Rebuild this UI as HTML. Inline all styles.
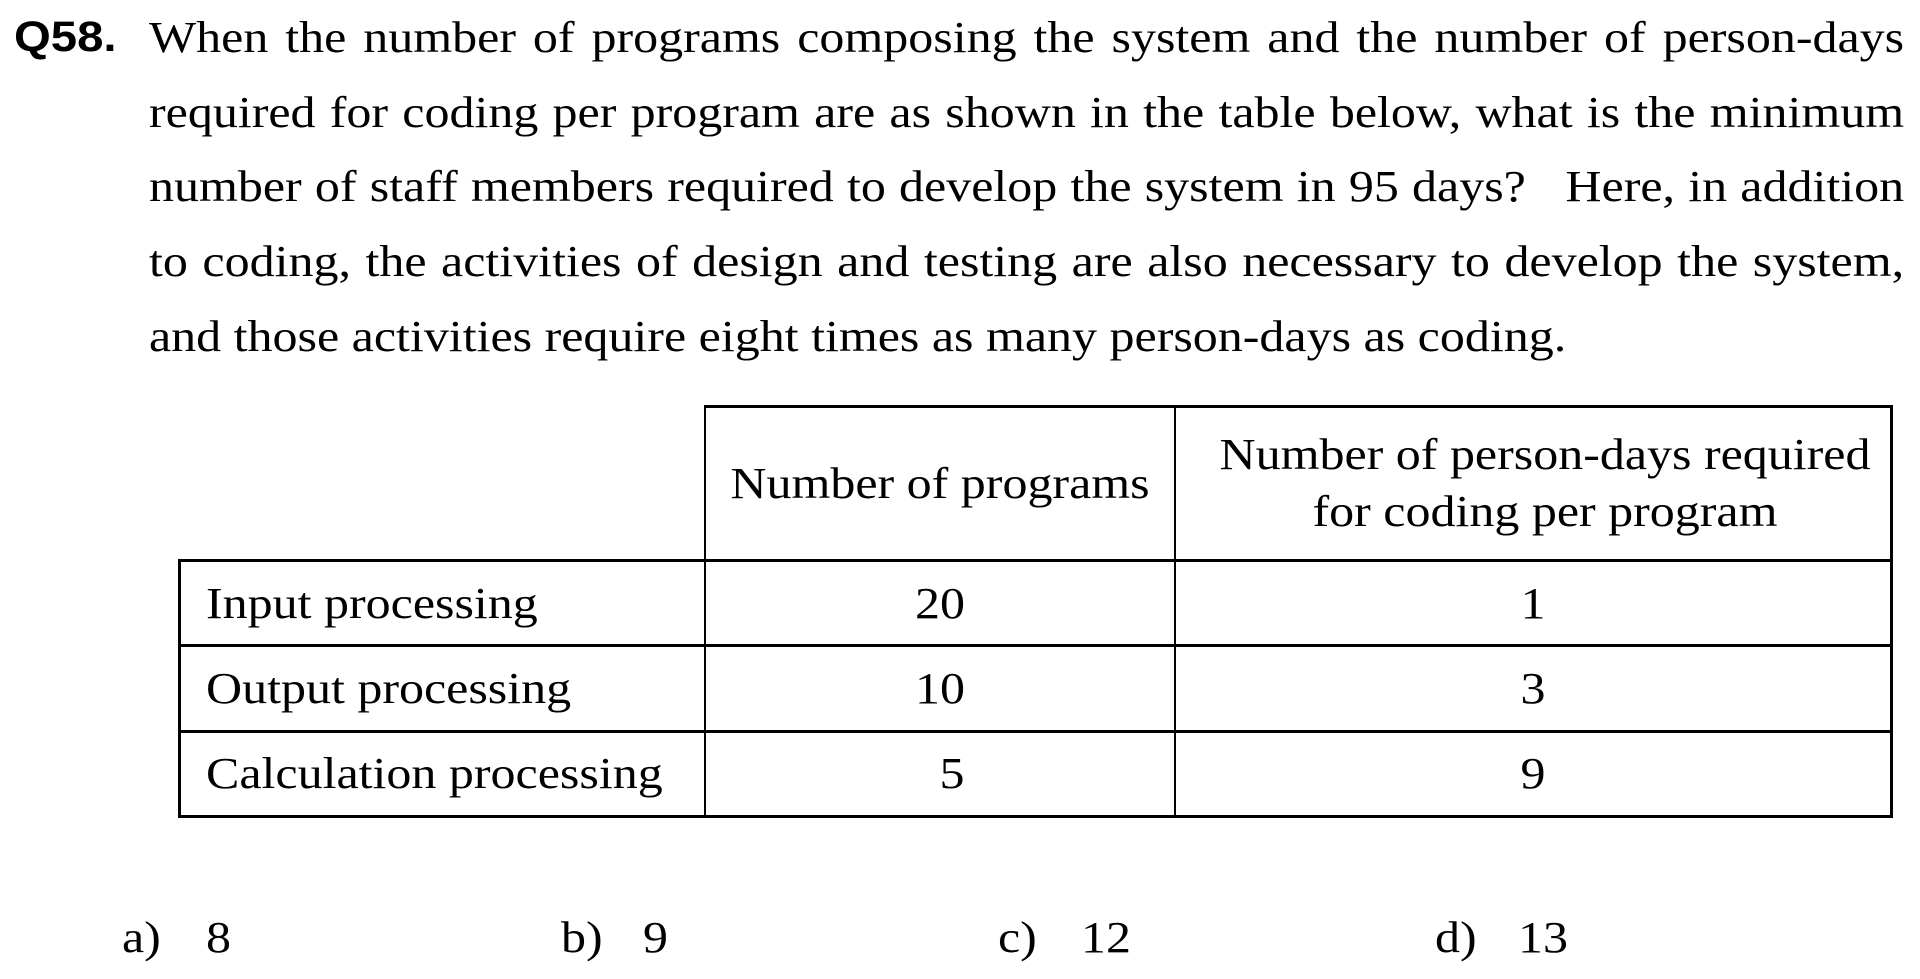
<!DOCTYPE html>
<html><head><meta charset="utf-8"><style>
body{margin:0;width:1920px;height:979px;background:#fff;position:relative;overflow:hidden;font-family:"Liberation Serif",serif;color:#000}
.a{position:absolute;font-size:44px;line-height:44px;white-space:nowrap;transform:scaleX(1.136);transform-origin:0 0}
.j{position:absolute;left:149px;width:1545px;font-size:44px;line-height:44px;text-align:justify;text-align-last:justify;transform:scaleX(1.136);transform-origin:0 0}
.h{position:absolute;background:#000}
.c{text-align:center;transform-origin:50% 0}
</style></head><body>
<div class="a" style="left:14px;top:16px;font-family:'Liberation Sans',sans-serif;font-weight:bold;font-size:43px;line-height:43px;transform:scaleX(1.1)">Q58.</div>
<div class="j" style="top:16px">When the number of programs composing the system and the number of person-days</div>
<div class="j" style="top:91px">required for coding per program are as shown in the table below, what is the minimum</div>
<div class="j" style="top:165px">number of staff members required to develop the system in 95 days? &nbsp; Here, in addition</div>
<div class="j" style="top:240px">to coding, the activities of design and testing are also necessary to develop the system,</div>
<div class="a" style="left:149px;top:315px">and those activities require eight times as many person-days as coding.</div>

<div class="h" style="left:704px;top:405px;width:1189px;height:3px"></div>
<div class="h" style="left:178px;top:559px;width:1715px;height:3px"></div>
<div class="h" style="left:178px;top:644px;width:1715px;height:3px"></div>
<div class="h" style="left:178px;top:730px;width:1715px;height:3px"></div>
<div class="h" style="left:178px;top:815px;width:1715px;height:3px"></div>
<div class="h" style="left:178px;top:559px;width:3px;height:259px"></div>
<div class="h" style="left:704px;top:405px;width:2px;height:413px"></div>
<div class="h" style="left:1174px;top:405px;width:2px;height:413px"></div>
<div class="h" style="left:1890px;top:405px;width:3px;height:413px"></div>

<div class="a c" style="left:706px;width:468px;top:462px">Number of programs</div>
<div class="a c" style="left:1188px;width:714px;top:433px">Number of person-days required</div>
<div class="a c" style="left:1188px;width:714px;top:490px">for coding per program</div>

<div class="a" style="left:206px;top:582px">Input processing</div>
<div class="a" style="left:206px;top:667px">Output processing</div>
<div class="a" style="left:206px;top:752px">Calculation processing</div>
<div class="a c" style="left:706px;width:468px;top:582px">20</div>
<div class="a c" style="left:706px;width:468px;top:667px">10</div>
<div class="a c" style="left:718px;width:468px;top:752px">5</div>
<div class="a c" style="left:1176px;width:714px;top:582px">1</div>
<div class="a c" style="left:1176px;width:714px;top:667px">3</div>
<div class="a c" style="left:1176px;width:714px;top:752px">9</div>

<div class="a" style="left:122px;top:916px">a)</div><div class="a" style="left:206px;top:916px">8</div>
<div class="a" style="left:561px;top:916px">b)</div><div class="a" style="left:643px;top:916px">9</div>
<div class="a" style="left:998px;top:916px">c)</div><div class="a" style="left:1081px;top:916px">12</div>
<div class="a" style="left:1435px;top:916px">d)</div><div class="a" style="left:1518px;top:916px">13</div>
</body></html>
